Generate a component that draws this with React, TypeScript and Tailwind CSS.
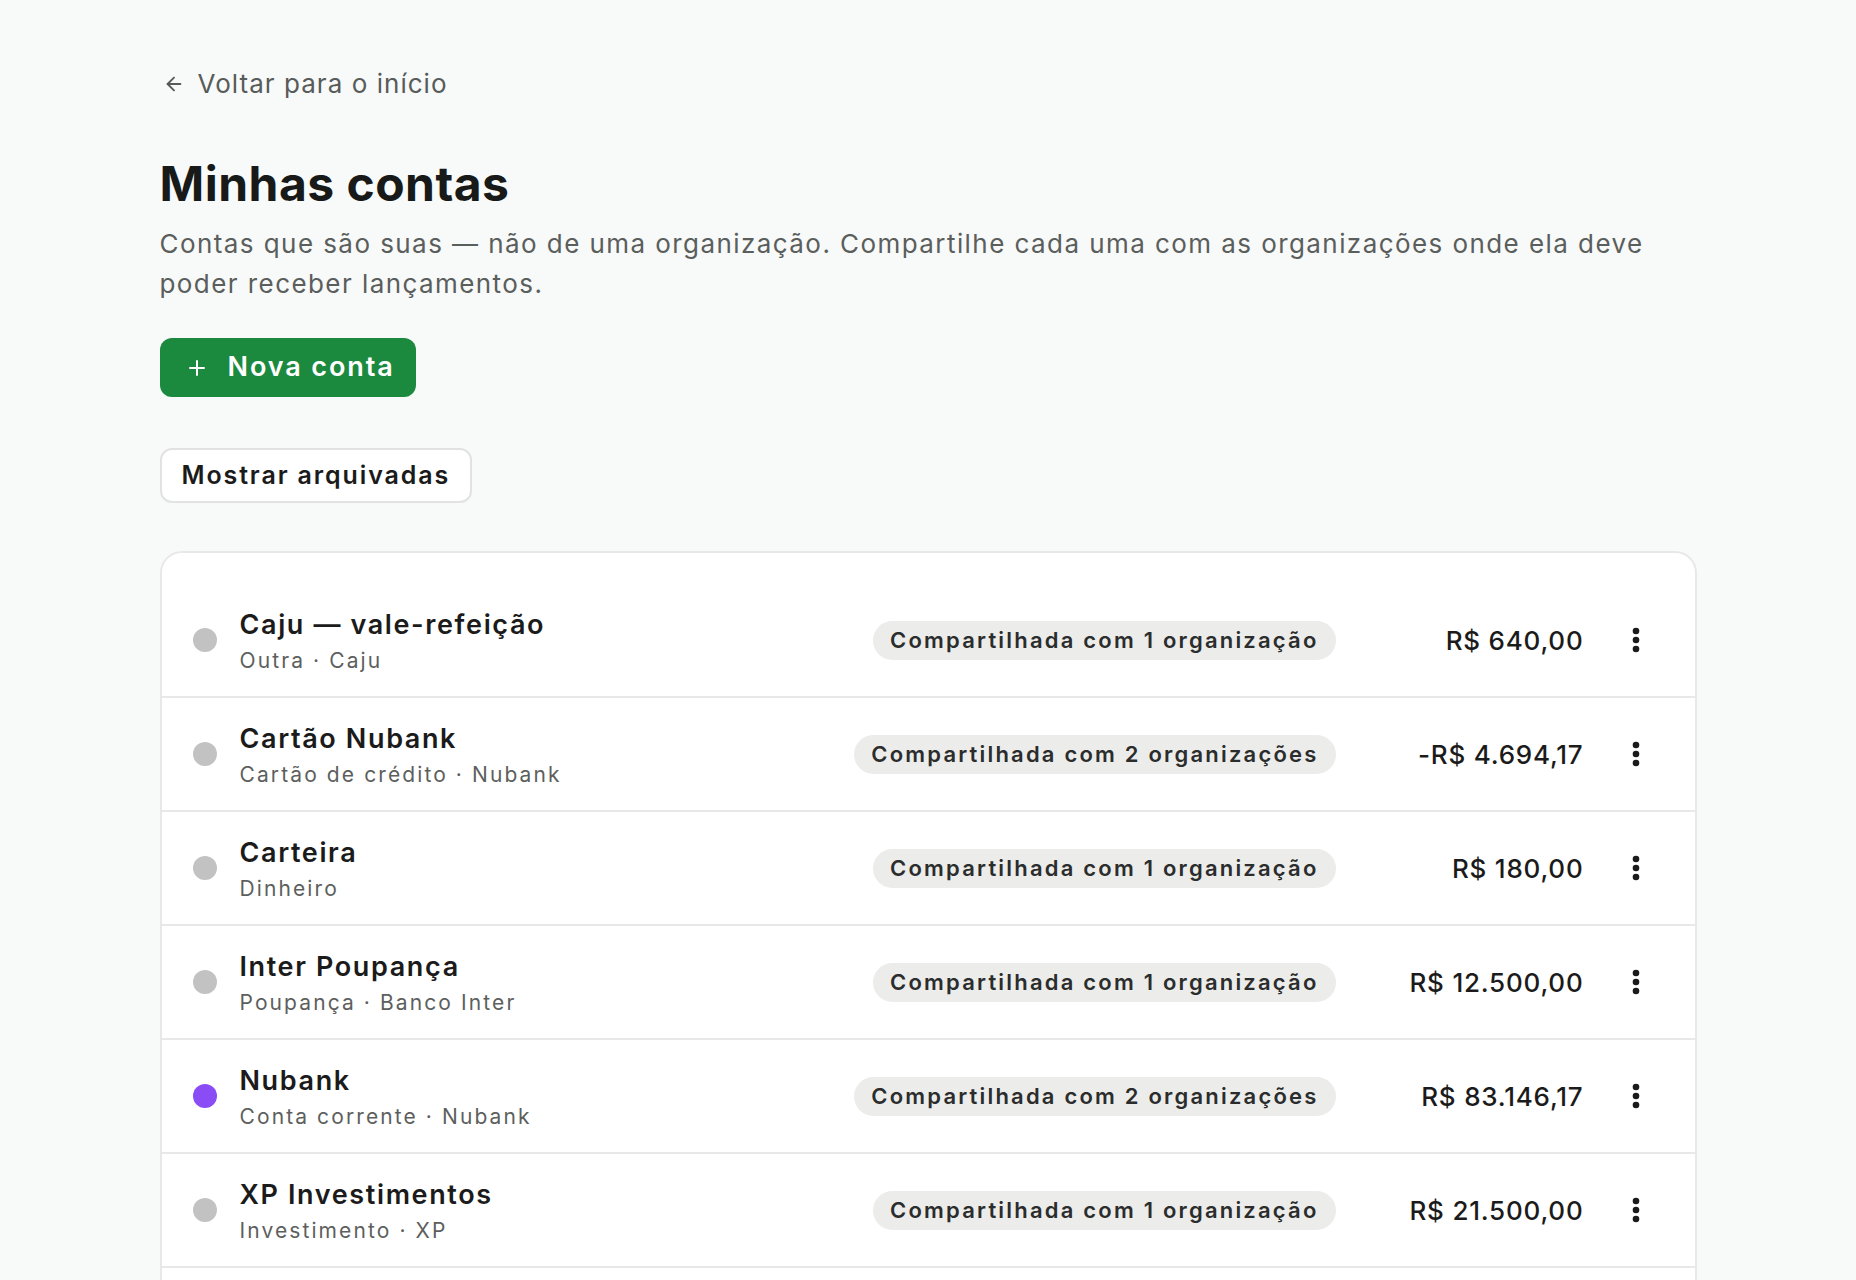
import React from "react";
import { ArrowLeft, Plus } from "lucide-react";

// Each account row on the list
interface Account {
  name: string;
  kind: string;
  bank: string;
  orgs: number;
  balance: string;
  color: "gray" | "purple";
}

const accounts: Account[] = [
  { name: "Caju — vale-refeição", kind: "Outra", bank: "Caju", orgs: 1, balance: "R$ 640,00", color: "gray" },
  { name: "Cartão Nubank", kind: "Cartão de crédito", bank: "Nubank", orgs: 2, balance: "-R$ 4.694,17", color: "gray" },
  { name: "Carteira", kind: "Dinheiro", bank: "", orgs: 1, balance: "R$ 180,00", color: "gray" },
  { name: "Inter Poupança", kind: "Poupança", bank: "Banco Inter", orgs: 1, balance: "R$ 12.500,00", color: "gray" },
  { name: "Nubank", kind: "Conta corrente", bank: "Nubank", orgs: 2, balance: "R$ 83.146,17", color: "purple" },
  { name: "XP Investimentos", kind: "Investimento", bank: "XP", orgs: 1, balance: "R$ 21.500,00", color: "gray" },
];

const KebabIcon = () => (
  <svg width="8" height="26" viewBox="0 0 8 26" fill="currentColor">
    <circle cx="4" cy="4" r="3.3" />
    <circle cx="4" cy="13" r="3.3" />
    <circle cx="4" cy="22" r="3.3" />
  </svg>
);

const AccountRow = ({ account }: { account: Account }) => {
  const sharedLabel =
    account.orgs === 1
      ? "Compartilhada com 1 organização"
      : `Compartilhada com ${account.orgs} organizações`;

  return (
    <div className="flex h-[114px] items-center border-b-2 border-[#e8e8e8] pl-[31px] pr-[35px]">
      <span
        className={`h-6 w-6 shrink-0 rounded-full ${account.color === "purple" ? "bg-[#8a4cf5]" : "bg-[#c2c2c2]"}`}
      />
      <div className="ml-[23px] mt-[2px] flex min-w-0 flex-1 flex-col">
        <span className="text-[27px] font-semibold leading-[34px] tracking-[0.06em] text-[#1b1b1b]">
          {account.name}
        </span>
        <span className="mt-[5px] text-[21px] leading-[28px] tracking-[0.1em] text-[#5d5f5e]">
          {account.bank ? `${account.kind} · ${account.bank}` : account.kind}
        </span>
      </div>
      <span className="rounded-full bg-[#ececeb] px-[17px] py-[4px] text-[22px] font-semibold leading-[31px] tracking-[0.1em] text-[#2b2d2c]">
        {sharedLabel}
      </span>
      <span className="ml-12 w-[200px] text-right text-[26px] font-medium tracking-[0.03em] text-[#1b1b1b]">
        {account.balance}
      </span>
      <button className="ml-[28px] flex h-12 w-12 items-center justify-center text-[#1b1b1b]">
        <KebabIcon />
      </button>
    </div>
  );
};

export default function App() {
  return (
    <div
      className="min-h-screen bg-[#f8f9f9]"
      style={{ fontFamily: "Inter, 'Noto Sans', sans-serif" }}
    >
      <div className="mx-auto max-w-[1537px] pt-[68px]">
        <a className="flex items-center gap-[13px] text-[26px] leading-[32px] tracking-[0.04em] text-[#575b59]">
          <ArrowLeft size={22} strokeWidth={2} className="ml-[3px]" />
          <span>Voltar para o início</span>
        </a>

        <h1 className="mt-[53px] text-[48px] font-bold leading-[62px] tracking-[0.01em] text-[#171a18]">
          Minhas contas
        </h1>
        <p className="mt-[9px] max-w-[1500px] text-[26px] leading-[40px] tracking-[0.055em] text-[#5a5e5c]">
          Contas que são suas — não de uma organização. Compartilhe cada uma com as organizações onde ela deve
          poder receber lançamentos.
        </p>

        <button className="mt-[34px] flex h-[59px] items-center gap-[19px] rounded-[12px] bg-[#1c8a3e] pl-[25px] pr-[21px] text-[27px] font-semibold tracking-[0.07em] text-white">
          <Plus size={24} strokeWidth={2} />
          Nova conta
        </button>

        <div className="mt-[51px]">
          <button className="flex h-[55px] items-center rounded-[12px] border-2 border-[#e2e2e2] bg-white px-[20px] text-[25px] font-semibold tracking-[0.075em] text-[#1b1b1b]">
            Mostrar arquivadas
          </button>
        </div>

        <div className="mt-[48px] rounded-[22px] border-2 border-[#e8e8e8] bg-white pt-[31px] pb-8">
          {accounts.map((account) => (
            <AccountRow key={account.name} account={account} />
          ))}
        </div>
      </div>
    </div>
  );
}
